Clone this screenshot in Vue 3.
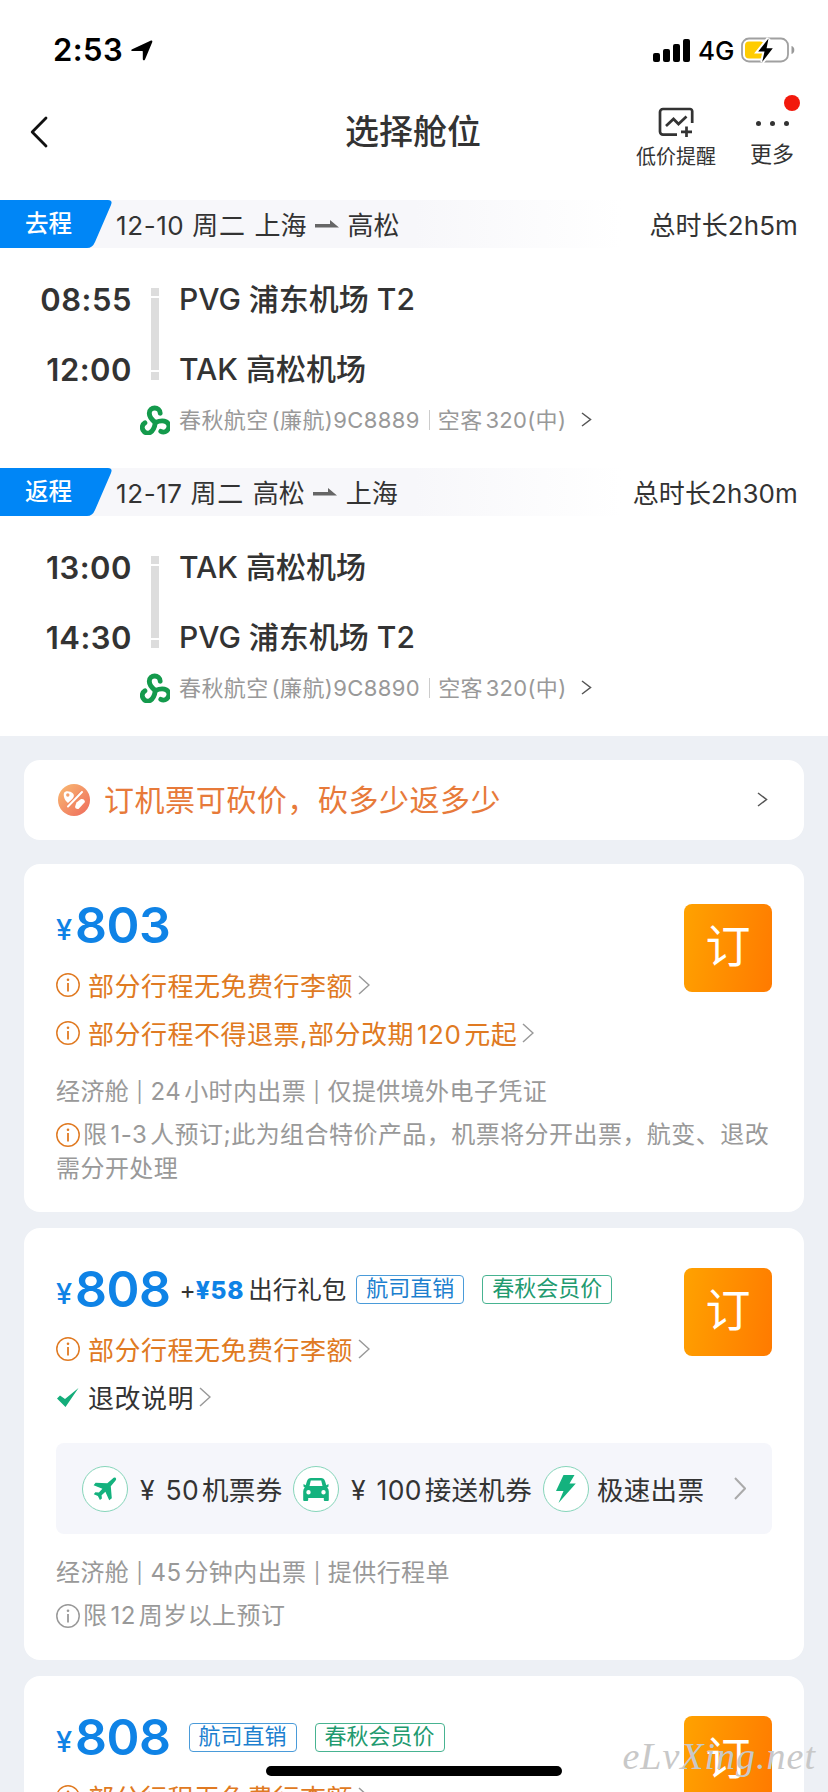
<template>
  <div class="page">
    <!-- Status bar -->
    <div class="status-bar">
      <span class="clock">2:53</span>
      <svg class="location" viewBox="0 0 22 21">
        <path d="M1.2 9.2 19.5.7c1.3-.6 2.2.3 1.7 1.5L14 19.4c-.6 1.4-2.2 1.2-2.2-.3v-7.6c0-.4-.2-.6-.6-.6H1.6C-.1 10.9-.3 9.9 1.2 9.2z" />
      </svg>
      <div class="signal">
        <i class="s1"></i>
        <i class="s2"></i>
        <i class="s3"></i>
        <i class="s4"></i>
      </div>
      <span class="network">4G</span>
      <svg class="battery" viewBox="0 0 54 26">
        <rect x="1" y="1.5" width="46" height="23" rx="7" fill="#fff" stroke="#a0a0a0" stroke-width="1.8" />
        <path d="M50.5 9v8c2-.5 2.8-2 2.8-4s-.8-3.500-2.800-4z" fill="#999" />
        <rect x="4" y="4.500" width="19" height="17" rx="4" fill="#fc0" />
        <path d="M27.500 1.500 17.200 14.500h6.300l-2.300 10.500 10.600-13.800h-6.200z" fill="#000" stroke="#fff" stroke-width="4" paint-order="stroke" />
      </svg>
    </div>

    <!-- Nav bar -->
    <header class="nav">
      <svg class="back" viewBox="0 0 18 32">
        <path d="M16 2 2.200 16 16 30" fill="none" stroke="#111" stroke-width="2.800" stroke-linecap="round" stroke-linejoin="round" />
      </svg>
      <h1>选择舱位</h1>
      <div class="nav-item remind">
        <svg viewBox="0 0 36 30">
          <g fill="none" stroke="#333" stroke-width="2.700">
            <path d="M19 27.600H5a3 3 0 0 1-3-3V5a3 3 0 0 1 3-3h27a2.200 2.200 0 0 1 2.200 2.200V16" />
            <path d="m8 19 7.500-7 5 5 8-7.500" />
            <path d="M28.500 19.500v10.500M23 24.800h11" />
          </g>
        </svg>
        <span>低价提醒</span>
      </div>
      <div class="nav-item more">
        <div class="dots"><i></i><i></i><i></i></div>
        <span>更多</span>
        <b class="red-dot"></b>
      </div>
    </header>

    <!-- Flight segments -->
    <section v-for="seg in segments" :key="seg.label" class="segment">
      <div class="segment-head">
        <div class="segment-tag">
          <svg viewBox="0 0 112 48">
            <path d="M0 0h108q5 0 3 5L95 42q-2.500 6-8 6H0z" fill="#0086f6" />
          </svg>
          <span>{{ seg.label }}</span>
        </div>
        <span class="date">{{ seg.date }}</span>
        <span class="city">{{ seg.from }}</span>
        <svg class="arrow" viewBox="0 0 24 9">
          <path d="M0 4h15V0l9 7.500H0z" fill="#666" />
        </svg>
        <span class="city">{{ seg.to }}</span>
        <span class="total">总时长{{ seg.total }}</span>
      </div>
      <div class="route">
        <div class="times">
          <span>{{ seg.depart }}</span>
          <span>{{ seg.arrive }}</span>
        </div>
        <div class="track"><i></i><b></b><i></i></div>
        <div class="airports">
          <span>{{ seg.fromAirport }}</span>
          <span>{{ seg.toAirport }}</span>
        </div>
      </div>
      <div class="airline">
        <svg class="airline-logo" viewBox="0 0 30 30">
          <g fill="none" stroke="#149a4c" stroke-width="4.900" stroke-linecap="round">
            <path
              v-for="angle in [0, 120, 240]"
              :key="angle"
              d="M15.300 17.500C12 15 9.300 12 9.300 8.300 9.300 1.300 20 1.300 20.200 8.300"
              :transform="`rotate(${angle} 15.300 17.500)`"
            />
          </g>
        </svg>
        <span class="carrier">春秋航空<em></em>(廉航){{ seg.flightNo }}</span>
        <i class="divider"></i>
        <span class="plane-type">空客<em></em>320(中)</span>
        <svg class="chevron-dark" viewBox="0 0 11 15"><path d="m1 1 8.500 6.500L1 14" /></svg>
      </div>
    </section>

    <main class="list">
      <div class="banner">
        <svg class="banner-icon" viewBox="0 0 32 32">
          <defs>
            <linearGradient id="bannerFill" x1="0" y1="0" x2="1" y2="1">
              <stop offset="0" stop-color="#f9bb72" />
              <stop offset="1" stop-color="#ee6a5c" />
            </linearGradient>
          </defs>
          <circle cx="16" cy="16" r="16" fill="url(#bannerFill)" />
          <path d="M6 9c1-2.500 6-2.500 9 .5 1.500 1.500 1 4-1 6l-4 3.500C7 17 5 12 6 9z" fill="#fff" />
          <path d="M24 8 10 22.500" stroke="#f08a62" stroke-width="4" />
          <path d="M24 8 10 22.500" stroke="#fff" stroke-width="2" stroke-linecap="round" />
          <path d="M18.500 18.500 23 15q3.500-.5 4 3l-6.500 7q-3 .5-3.500-2 .5-2 1.500-4.500z" fill="#fff" />
          <circle cx="9.800" cy="11" r="1.700" fill="#f3a06c" />
        </svg>
        <span>订机票可砍价，砍多少返多少</span>
        <svg class="chevron-dark" viewBox="0 0 11 15"><path d="m1 1 8.500 6.500L1 14" /></svg>
      </div>

      <article v-for="(offer, i) in offers" :key="i" class="card">
        <div class="card-top">
          <div class="summary">
            <div class="price-row">
              <span class="yen">¥</span>
              <span class="price">{{ offer.price }}</span>
              <span v-if="offer.gift" class="gift">+<b>¥{{ offer.gift }}</b>出行礼包</span>
              <span v-for="tag in offer.tags" :key="tag.text" class="tag" :class="tag.color">{{ tag.text }}</span>
            </div>
            <div v-for="rule in offer.rules" :key="rule.text" class="rule" :class="{ ok: rule.ok }">
              <svg v-if="rule.ok" class="rule-icon" viewBox="0 0 24 24">
                <path d="M1 13.500 4 10.500l5 3.500L22.500 3 9.500 22z" fill="#14ad7a" />
              </svg>
              <svg v-else class="rule-icon" viewBox="0 0 24 24">
                <circle cx="12" cy="12" r="11.200" fill="none" stroke="currentColor" stroke-width="1.500" />
                <path d="M12 10v8.500" stroke="currentColor" stroke-width="1.800" />
                <circle cx="12" cy="6.800" r="1.300" fill="currentColor" />
              </svg>
              <span>{{ rule.text }}<template v-if="rule.fee"><em></em>{{ rule.fee }}<em></em>元起</template></span>
              <svg class="chevron" viewBox="0 0 12 20"><path d="M1 1l10 9-10 9" /></svg>
            </div>
          </div>
          <button class="book">订</button>
        </div>

        <div v-if="offer.gift" class="benefits">
          <span class="benefit-icon">
            <svg viewBox="0 0 24 24">
              <path d="M22.500.8c1 .9.700 2-.1 3l-4.600 5.500 1 12-2.600 2-3.800-8.600-3.800 3.500.3 3.200-2 1.600-2-3.900-4.100-1.800 1.500-2 3.600.2 3.500-3.800L.6 8.200l2-2.400 11.700.4 5.200-4.500c1-.9 2.200-1.600 3-.9z" />
            </svg>
          </span>
          <span class="benefit-text b1">¥ 50<em></em>机票券</span>
          <span class="benefit-icon">
            <svg class="car" viewBox="0 0 26 24">
              <path fill-rule="evenodd" d="M8 1h10q3 0 4 3l1.300 4.200L25.500 7v2.500l-1.300 1q1.600 1.500 1.600 4V23q0 1-1 1h-3q-1 0-1-1v-2H5.200v2q0 1-1 1h-3q-1 0-1-1v-8.500q0-2.500 1.600-4l-1.300-1V7l2.200 1.200L4 4q1-3 4-3zM7.800 3.500 6.500 9h13l-1.300-5.500zM5.500 13a2.200 2.200 0 1 0 0 4.400 2.200 2.200 0 0 0 0-4.400zm15 0a2.200 2.200 0 1 0 0 4.400 2.200 2.200 0 0 0 0-4.400z" />
            </svg>
          </span>
          <span class="benefit-text b2">¥ 100<em></em>接送机券</span>
          <span class="benefit-icon">
            <svg class="bolt" viewBox="0 0 20 28">
              <path d="M7.500 0h11l-5 8.500h6.300L2.500 28l5-12H0z" />
            </svg>
          </span>
          <span class="benefit-text">极速出票</span>
          <svg class="chevron big" viewBox="0 0 12 23"><path d="M1 1l10 10.500L1 22" /></svg>
        </div>

        <template v-if="offer.note">
          <p class="meta">经济舱 <i>|</i> {{ offer.issue[0] }}<em></em>{{ offer.issue[1] }} <i>|</i> {{ offer.voucher }}</p>
          <p class="note">
            <svg class="note-icon" :class="{ warn: offer.warn }" viewBox="0 0 24 24">
              <circle cx="12" cy="12" r="11.200" fill="none" stroke="currentColor" stroke-width="1.500" />
              <path d="M12 10v8.500" stroke="currentColor" stroke-width="1.800" />
              <circle cx="12" cy="6.800" r="1.300" fill="currentColor" />
            </svg>限<em></em>{{ offer.note[0] }}<em></em>{{ offer.note[1] }}
          </p>
        </template>
      </article>
    </main>

    <div class="home-indicator"></div>
    <div class="watermark">eLvXing.net</div>
  </div>
</template>

<script setup>
const segments = [
  {
    label: '去程',
    date: '12-10 周二',
    from: '上海',
    to: '高松',
    total: '2h5m',
    depart: '08:55',
    arrive: '12:00',
    fromAirport: 'PVG 浦东机场 T2',
    toAirport: 'TAK 高松机场',
    flightNo: '9C8889'
  },
  {
    label: '返程',
    date: '12-17 周二',
    from: '高松',
    to: '上海',
    total: '2h30m',
    depart: '13:00',
    arrive: '14:30',
    fromAirport: 'TAK 高松机场',
    toAirport: 'PVG 浦东机场 T2',
    flightNo: '9C8890'
  }
]

const memberTags = [
  { text: '航司直销', color: 'blue' },
  { text: '春秋会员价', color: 'green' }
]

const offers = [
  {
    price: 803,
    tags: [],
    rules: [
      { text: '部分行程无免费行李额' },
      { text: '部分行程不得退票,部分改期', fee: 120 }
    ],
    issue: ['24', '小时内出票'],
    voucher: '仅提供境外电子凭证',
    note: ['1-3', '人预订;此为组合特价产品，机票将分开出票，航变、退改需分开处理'],
    warn: true
  },
  {
    price: 808,
    gift: 58,
    tags: memberTags,
    rules: [
      { text: '部分行程无免费行李额' },
      { text: '退改说明', ok: true }
    ],
    issue: ['45', '分钟内出票'],
    voucher: '提供行程单',
    note: ['12', '周岁以上预订']
  },
  {
    price: 808,
    tags: memberTags,
    rules: [
      { text: '部分行程无免费行李额' },
      { text: '退改说明', ok: true }
    ]
  }
]
</script>

<style>
body {
  background: #edf0f5;
}
</style>

<style scoped>
.page {
  position: relative;
  width: 828px;
  height: 1792px;
  overflow: hidden;
  background: #edf0f5;
  color: #333;
  font-family: Inter, "Noto Sans CJK SC", sans-serif;
}

svg {
  display: block;
  flex: none;
}

span {
  white-space: nowrap;
}

/* small gap between Chinese and digits */
em {
  display: inline-block;
  width: 3px;
}

/* Status bar */
.status-bar {
  display: flex;
  align-items: center;
  height: 100px;
  padding-left: 53px;
  background: #fff;
  color: #000;
}

.clock {
  width: 78px;
  padding-bottom: 2px;
  font-size: 31px;
  font-weight: 600;
  letter-spacing: 0.4px;
}

.location {
  width: 22px;
  height: 21px;
}

.signal {
  display: flex;
  align-items: flex-end;
  gap: 3px;
  height: 23px;
  margin-left: 500px;
}

.signal i {
  width: 7px;
  border-radius: 2px;
  background: #000;
}

.s1 {
  height: 9px;
}

.s2 {
  height: 13px;
}

.s3 {
  height: 18px;
}

.s4 {
  height: 23px;
}

.network {
  width: 43px;
  margin-left: 8px;
  font-size: 26px;
  font-weight: 500;
}

.battery {
  width: 54px;
  height: 26px;
}

/* Nav bar */
.nav {
  display: flex;
  height: 100px;
  background: #fff;
}

.back {
  width: 18px;
  height: 32px;
  margin: 16px 0 0 30px;
}

h1 {
  width: 140px;
  margin: 7px 0 0 297px;
  font-size: 34px;
  font-weight: 500;
  line-height: 50px;
  white-space: nowrap;
}

.nav-item {
  position: relative;
  display: flex;
  flex-direction: column;
  align-items: center;
}

.remind {
  width: 82px;
  margin-left: 150px;
  padding-top: 7px;
}

.remind svg {
  width: 36px;
  height: 30px;
}

.remind span {
  margin-top: 5px;
  font-size: 20px;
  line-height: 30px;
}

.more {
  width: 46px;
  margin-left: 32px;
}

.dots {
  display: flex;
  gap: 9px;
  padding: 21px 0 5px;
}

.dots i {
  width: 5px;
  height: 5px;
  border-radius: 50%;
  background: #333;
}

.more span {
  margin-top: 7px;
  font-size: 22px;
  line-height: 32px;
}

.red-dot {
  position: absolute;
  top: -5px;
  right: -5px;
  width: 16px;
  height: 16px;
  border-radius: 50%;
  background: #f2190c;
}

/* Segments */
.segment {
  height: 268px;
  background: #fff;
}

.segment-head {
  display: flex;
  align-items: center;
  height: 48px;
  padding-right: 30px;
  background: linear-gradient(90deg, #f7f7fa 50%, #fff 75%);
  font-size: 26px;
}

.segment-tag {
  position: relative;
  width: 116px;
  height: 48px;
}

.segment-tag svg {
  width: 112px;
  height: 48px;
}

.segment-tag span {
  position: absolute;
  top: 0;
  left: 25px;
  color: #fff;
  font-size: 23.5px;
  font-weight: 500;
  line-height: 47px;
}

.date {
  margin-right: 9px;
  padding-bottom: 2px;
  letter-spacing: 0.6px;
}

.city,
.total {
  padding-bottom: 2px;
}

.arrow {
  width: 24px;
  height: 9px;
  margin: 0 9px 0 8px;
}

.total {
  margin-left: auto;
  letter-spacing: 0.1px;
}

.route {
  display: flex;
  height: 140px;
  padding-top: 17px;
}

.times,
.airports {
  display: flex;
  flex-direction: column;
  font-size: 30px;
  font-weight: 500;
  line-height: 70px;
}

.airports {
  margin-top: -1px;
}

.times {
  width: 132px;
  text-align: right;
  font-size: 31px;
  font-weight: 600;
  letter-spacing: 0.5px;
}

.track {
  display: flex;
  flex-direction: column;
  gap: 2px;
  width: 8px;
  margin: 23px 20px 0 19px;
}

.track i {
  height: 8px;
  background: #ddd;
}

.track b {
  height: 72px;
  background: #ddd;
}

.airline {
  display: flex;
  align-items: center;
  height: 30px;
  padding-left: 140px;
  color: #999;
  font-size: 22px;
}

.airline-logo {
  width: 30px;
  height: 30px;
  margin-right: 9px;
}

.carrier {
  padding-bottom: 5px;
  letter-spacing: 0.4px;
}

.plane-type {
  padding-bottom: 5px;
  letter-spacing: 0.3px;
}

.divider {
  width: 1px;
  height: 20px;
  margin: 0 8px 0 9px;
  background: #ccc;
}

.chevron-dark {
  width: 11px;
  height: 15px;
  fill: none;
  stroke: #555;
  stroke-width: 1.5;
}

.airline .chevron-dark {
  margin: 0 0 1px 15px;
}

/* Banner */
.list {
  display: flex;
  flex-direction: column;
  padding: 24px 24px 0;
}

.banner {
  display: flex;
  align-items: center;
  height: 80px;
  margin-bottom: 24px;
  padding: 0 36px 0 34px;
  border-radius: 16px;
  background: #fff;
  color: #e77a3a;
  font-size: 30px;
  letter-spacing: 0.55px;
}

.banner span {
  padding-bottom: 5px;
}

.banner-icon {
  width: 32px;
  height: 32px;
  margin-right: 14px;
}

.banner .chevron-dark {
  margin: 0 0 2px auto;
}

/* Offers */
.card {
  flex: none;
  margin-bottom: 16px;
  padding: 40px 32px 26px;
  border-radius: 16px;
  background: #fff;
}

.card-top {
  display: flex;
  justify-content: space-between;
}

.price-row {
  display: flex;
  align-items: center;
  height: 44px;
  margin-bottom: 13px;
  color: #0f83e6;
}

.yen {
  width: 19px;
  padding-top: 7px;
  font-size: 29px;
  font-weight: 500;
}

.price {
  padding-bottom: 2px;
  font-size: 50px;
  font-weight: 600;
  letter-spacing: -0.5px;
}

.gift {
  margin-left: 9px;
  padding-bottom: 4px;
  color: #333;
  font-size: 24.5px;
}

.gift b {
  margin-right: 4px;
  color: #0f83e6;
  font-weight: 800;
  font-size: 24.5px;
  letter-spacing: 0.7px;
}

.tag {
  height: 27px;
  margin: 0 0 2px 18px;
  padding: 0 9px;
  border: 1px solid #4a9bd9;
  border-radius: 4px;
  color: #1c7fcf;
  font-size: 22px;
  line-height: 25px;
}

.gift + .tag {
  margin-left: 10px;
}

.tag.green {
  border-color: #48b391;
  color: #219a6f;
}

.rule {
  display: flex;
  align-items: center;
  height: 48px;
  color: #e07a22;
  font-size: 26px;
  letter-spacing: 0.5px;
}

.rule span {
  padding-bottom: 2px;
}

.rule.ok {
  color: #333;
}

.rule-icon {
  width: 24px;
  height: 24px;
  margin-right: 8px;
}

.chevron {
  width: 12px;
  height: 20px;
  margin-left: 5px;
  fill: none;
  stroke: #999;
  stroke-width: 1.5;
}

.book {
  width: 88px;
  height: 88px;
  padding: 0 0 3px;
  border: none;
  border-radius: 8px;
  background: linear-gradient(100deg, #ffa200, #ff7a00);
  color: #fff;
  font-family: inherit;
  font-size: 45px;
  line-height: 85px;
}

.benefits {
  display: flex;
  align-items: center;
  height: 91px;
  margin-top: 22px;
  padding: 0 26px;
  border-radius: 8px;
  background: #f5f6fb;
  font-size: 26.5px;
  word-spacing: 3px;
}

.benefits + .meta {
  margin-top: 19px;
}

.benefits ~ .note {
  margin-bottom: 1px;
}

.benefit-icon {
  display: flex;
  flex: none;
  align-items: center;
  justify-content: center;
  width: 44px;
  height: 44px;
  border: 1px solid #86d5ba;
  border-radius: 50%;
  background: #fff;
}

.benefit-icon svg {
  width: 24px;
  height: 24px;
  fill: #14b27e;
}

.benefit-icon .car {
  width: 26px;
}

.benefit-icon .bolt {
  width: 20px;
  height: 28px;
}

.benefit-text {
  margin-left: 8px;
  letter-spacing: 0.3px;
}

.b1 {
  width: 153px;
  margin-left: 12px;
}

.b2 {
  width: 192px;
  margin-left: 12px;
}

.chevron.big {
  height: 23px;
  margin-left: auto;
  stroke: #aaa;
  stroke-width: 2;
}

.meta {
  margin: 15px 0 0;
  color: #999;
  font-size: 24px;
  line-height: 40px;
  letter-spacing: 0.4px;
  white-space: nowrap;
}

.meta i {
  font-size: 20px;
  font-style: normal;
  vertical-align: 1px;
}

.note {
  margin: 6px 0 0;
  color: #999;
  font-size: 24px;
  line-height: 34px;
  letter-spacing: 0.45px;
}

.note-icon {
  display: inline-block;
  width: 24px;
  height: 24px;
  margin-right: 3px;
  vertical-align: -4px;
}

.note-icon.warn {
  color: #e07a22;
}

.home-indicator {
  position: absolute;
  left: 266px;
  bottom: 16px;
  width: 296px;
  height: 10px;
  border-radius: 5px;
  background: #000;
}

.watermark {
  position: absolute;
  right: 12px;
  bottom: 14px;
  color: #c8c8c8;
  font-family: "Liberation Serif", serif;
  font-size: 38px;
  font-style: italic;
  line-height: 44px;
  letter-spacing: 1px;
}
</style>
